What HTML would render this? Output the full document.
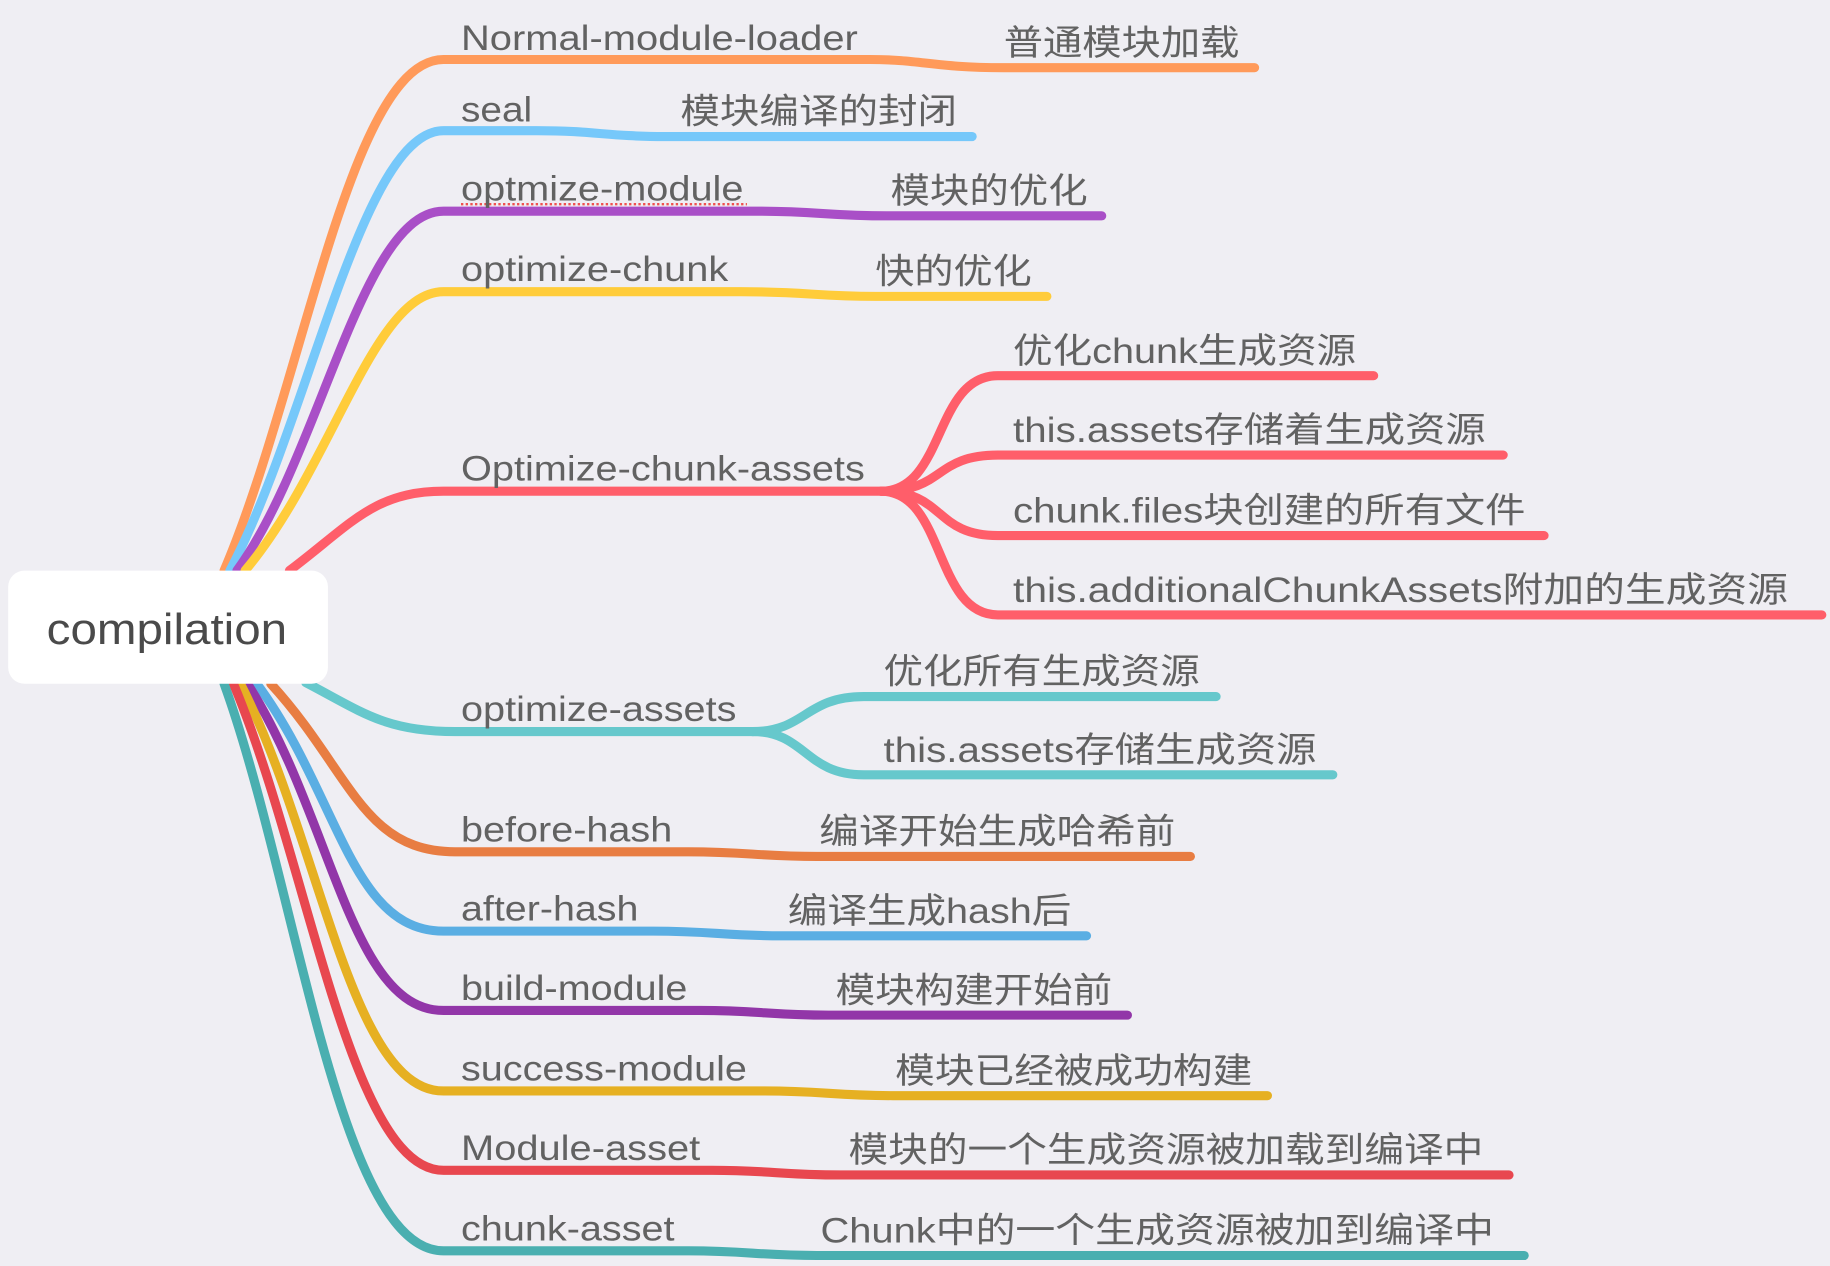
<!DOCTYPE html>
<html><head><meta charset="utf-8"><style>
html,body{margin:0;padding:0;background:#efeef3;}
svg{display:block;}
text{font-family:"Liberation Sans","Noto Sans CJK SC",sans-serif;fill:#626262;font-size:30px;}
</style></head><body>
<svg width="1830" height="1266" viewBox="0 0 1568 1085" preserveAspectRatio="none" xmlns="http://www.w3.org/2000/svg">
<rect width="1568" height="1085" fill="#efeef3"/>
<g fill="none" stroke-width="7.8" stroke-linecap="round">
<path d="M192 489 C260 330 300 51 380 51 H745 C790 51 800 58 860 58 H1075" stroke="#ff9a5a"/>
<path d="M197 489 C265 360 310 112 380 112 H460 C510 112 520 117 570 117 H833" stroke="#76c8fa"/>
<path d="M203 489 C275 390 310 181 380 181 H650 C700 181 710 185 760 185 H944" stroke="#a94fc7"/>
<path d="M210 489 C285 400 320 250 380 250 H635 C690 250 700 254 750 254 H897" stroke="#ffcc3a"/>
<path d="M248 489 C300 450 320 421 380 421 H755" stroke="#ff5e6a"/>
<path d="M755 421 C810 421 800 322 855 322 H1177" stroke="#ff5e6a"/>
<path d="M755 421 C810 421 800 390 855 390 H1288" stroke="#ff5e6a"/>
<path d="M755 421 C810 421 800 459 855 459 H1323" stroke="#ff5e6a"/>
<path d="M755 421 C810 421 800 527 855 527 H1561" stroke="#ff5e6a"/>
<path d="M262 585 C310 610 330 627 390 627 H645" stroke="#66c8cc"/>
<path d="M645 627 C690 627 690 597 740 597 H1042" stroke="#66c8cc"/>
<path d="M645 627 C690 627 690 664 740 664 H1142" stroke="#66c8cc"/>
<path d="M232 586 C300 660 310 730 390 730 H590 C640 730 650 734 700 734 H1020" stroke="#e87d42"/>
<path d="M220 586 C290 680 300 798 380 798 H560 C610 798 620 802 670 802 H931" stroke="#5aaee3"/>
<path d="M212 586 C285 700 300 866 380 866 H600 C650 866 660 870 710 870 H966" stroke="#9236a8"/>
<path d="M206 586 C275 720 300 935 380 935 H655 C705 935 715 939 765 939 H1086" stroke="#e6b022"/>
<path d="M200 586 C265 740 300 1003 380 1003 H610 C660 1003 670 1007 720 1007 H1293" stroke="#e8474f"/>
<path d="M192 586 C255 760 290 1072 380 1072 H590 C640 1072 650 1076 700 1076 H1306" stroke="#4aafb0"/>
</g>
<line x1="395" y1="175" x2="640" y2="175" stroke="#f05050" stroke-width="2" stroke-dasharray="2 2"/>
<rect x="7" y="489" width="274" height="97" rx="14" fill="#fff"/>
<text x="40" y="552" style="font-size:37px;fill:#4a4a4a" textLength="206" lengthAdjust="spacingAndGlyphs">compilation</text>

<text x="395" y="43" textLength="340" lengthAdjust="spacingAndGlyphs">Normal-module-loader</text>
<text x="860" y="47" textLength="202" lengthAdjust="spacingAndGlyphs">普通模块加载</text>
<text x="395" y="104" textLength="61" lengthAdjust="spacingAndGlyphs">seal</text>
<text x="583" y="106" textLength="237" lengthAdjust="spacingAndGlyphs">模块编译的封闭</text>
<text x="395" y="172" textLength="242" lengthAdjust="spacingAndGlyphs">optmize-module</text>
<text x="763" y="174" textLength="169" lengthAdjust="spacingAndGlyphs">模块的优化</text>
<text x="395" y="241" textLength="229" lengthAdjust="spacingAndGlyphs">optimize-chunk</text>
<text x="750" y="243" textLength="134" lengthAdjust="spacingAndGlyphs">快的优化</text>
<text x="868" y="311" textLength="294" lengthAdjust="spacingAndGlyphs">优化chunk生成资源</text>
<text x="868" y="379" textLength="405" lengthAdjust="spacingAndGlyphs">this.assets存储着生成资源</text>
<text x="868" y="448" textLength="439" lengthAdjust="spacingAndGlyphs">chunk.files块创建的所有文件</text>
<text x="868" y="516" textLength="664" lengthAdjust="spacingAndGlyphs">this.additionalChunkAssets附加的生成资源</text>
<text x="395" y="412" textLength="346" lengthAdjust="spacingAndGlyphs">Optimize-chunk-assets</text>
<text x="395" y="618" textLength="236" lengthAdjust="spacingAndGlyphs">optimize-assets</text>
<text x="757" y="586" textLength="271" lengthAdjust="spacingAndGlyphs">优化所有生成资源</text>
<text x="757" y="653" textLength="371" lengthAdjust="spacingAndGlyphs">this.assets存储生成资源</text>
<text x="395" y="721" textLength="181" lengthAdjust="spacingAndGlyphs">before-hash</text>
<text x="702" y="723" textLength="305" lengthAdjust="spacingAndGlyphs">编译开始生成哈希前</text>
<text x="395" y="789" textLength="152" lengthAdjust="spacingAndGlyphs">after-hash</text>
<text x="675" y="791" textLength="243" lengthAdjust="spacingAndGlyphs">编译生成hash后</text>
<text x="395" y="857" textLength="194" lengthAdjust="spacingAndGlyphs">build-module</text>
<text x="716" y="859" textLength="237" lengthAdjust="spacingAndGlyphs">模块构建开始前</text>
<text x="395" y="926" textLength="245" lengthAdjust="spacingAndGlyphs">success-module</text>
<text x="767" y="928" textLength="306" lengthAdjust="spacingAndGlyphs">模块已经被成功构建</text>
<text x="395" y="994" textLength="205" lengthAdjust="spacingAndGlyphs">Module-asset</text>
<text x="727" y="996" textLength="544" lengthAdjust="spacingAndGlyphs">模块的一个生成资源被加载到编译中</text>
<text x="395" y="1063" textLength="183" lengthAdjust="spacingAndGlyphs">chunk-asset</text>
<text x="703" y="1065" textLength="577" lengthAdjust="spacingAndGlyphs">Chunk中的一个生成资源被加到编译中</text>
</svg>
</body></html>
